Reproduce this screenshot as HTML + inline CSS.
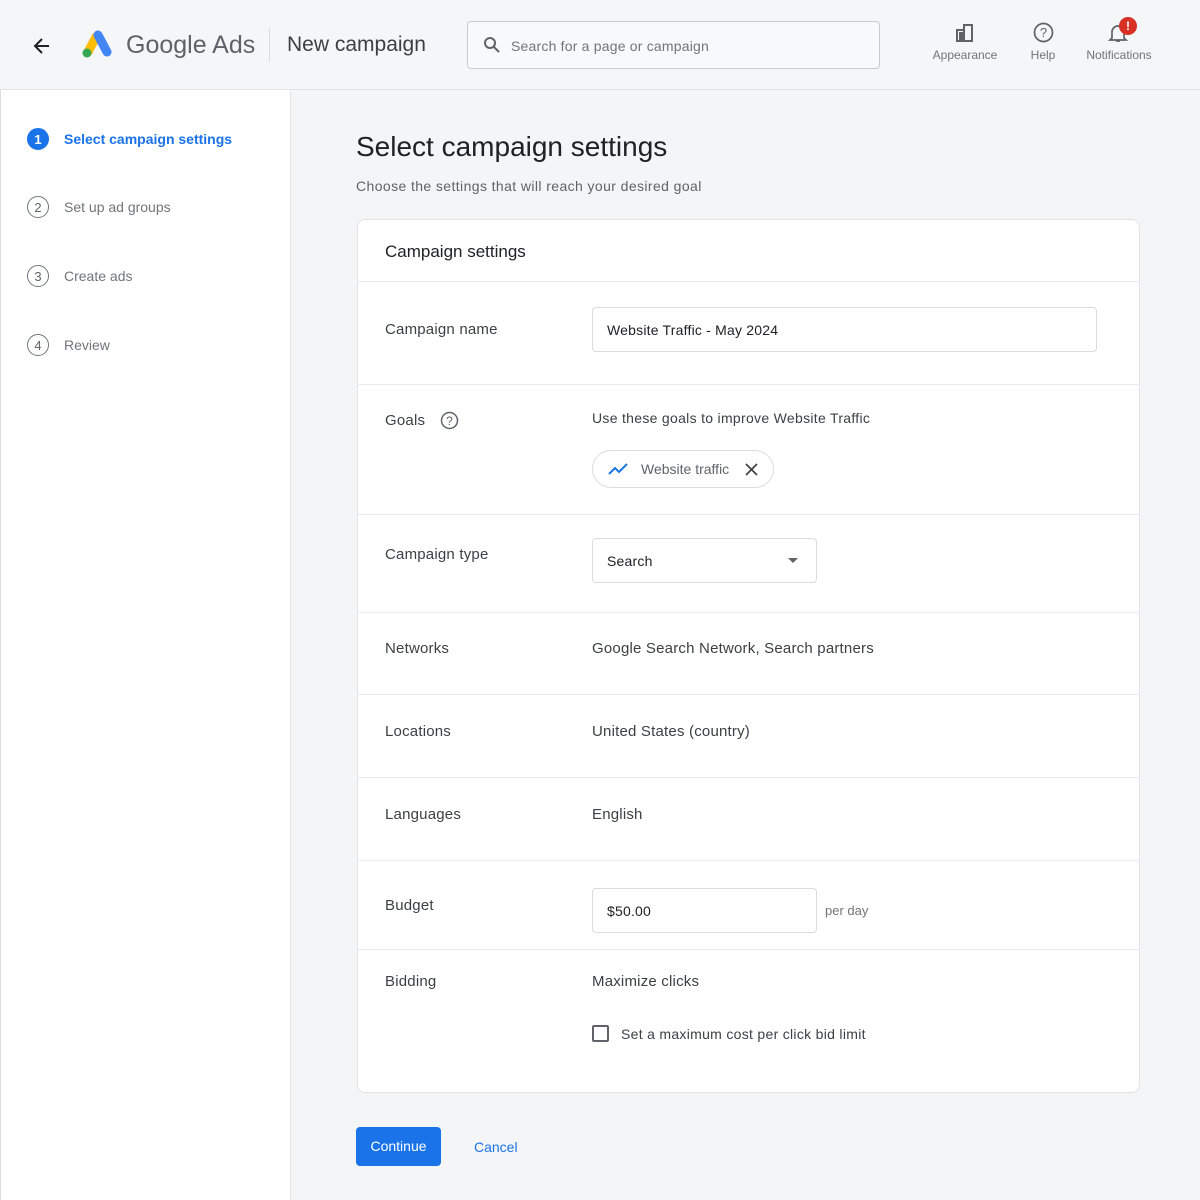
<!DOCTYPE html>
<html><head><style>
*{box-sizing:border-box;margin:0;padding:0}
body{width:1200px;height:1200px;overflow:hidden;font-family:"Liberation Sans",Arial,sans-serif;background:#f4f5f6;position:relative;color:#3c4043}
.abs{position:absolute}
.hdr{left:0;top:0;width:1200px;height:90px;background:#f5f6f7;border-bottom:1px solid #e3e4e6}
.side{left:0;top:90px;width:291px;height:1110px;background:#fff;border-right:1px solid #e3e4e6;border-left:1px solid #ddd}
.main{left:292px;top:90px;width:908px;height:1110px;background:#f4f5f6}
.step{left:27px;font-size:14px;color:#70757a;display:flex;align-items:center}
.circ{width:22px;height:22px;border-radius:50%;border:1.5px solid #70757a;font-size:13px;display:flex;align-items:center;justify-content:center;margin-right:15px;color:#5f6368}
.card{left:357px;top:219px;width:783px;height:874px;background:#fff;border:1px solid #e3e4e6;border-radius:8px}
.line{left:357px;width:783px;height:1px;background:#e8eaed}
.lbl{left:385px;font-size:15px;color:#3c4043;letter-spacing:0.2px}
.val{left:592px;font-size:15px;color:#3c4043;letter-spacing:0.2px}
.inp{border:1px solid #dadce0;border-radius:4px;background:#fff;font-size:14px;color:#202124;padding-left:14px;display:flex;align-items:center;letter-spacing:0.2px}
.ico{text-align:center;font-size:12px;color:#70757a}
</style></head><body>
<div class="abs hdr"></div>
<svg class="abs" style="left:33px;top:37px" width="18" height="18" viewBox="0 0 18 18"><path d="M16 9H3M9 2L2 9l7 7" stroke="#202124" stroke-width="2" fill="none"/></svg>
<svg class="abs" style="left:80px;top:29px" width="34" height="30" viewBox="0 0 34 30"><path d="M8 23L16 8" stroke="#fbbc04" stroke-width="9" stroke-linecap="round"/><path d="M18 6L27 23" stroke="#4285f4" stroke-width="9" stroke-linecap="round"/><circle cx="7" cy="24" r="4.5" fill="#34a853"/></svg>
<div class="abs" style="left:126px;top:31px;font-size:25px;color:#5f6368">Google Ads</div>
<div class="abs" style="left:269px;top:28px;width:1px;height:34px;background:#dadce0"></div>
<div class="abs" style="left:287px;top:33px;font-size:21px;color:#3c4043">New campaign</div>
<div class="abs" style="left:467px;top:21px;width:413px;height:48px;border:1px solid #c9cbce;border-radius:4px;background:#f8f9fa"></div>
<svg class="abs" style="left:483px;top:36px" width="18" height="18" viewBox="0 0 18 18"><circle cx="7" cy="7" r="5" stroke="#5f6368" stroke-width="2" fill="none"/><path d="M11 11l5 5" stroke="#5f6368" stroke-width="2"/></svg>
<div class="abs" style="left:511px;top:38px;font-size:14px;color:#70757a;letter-spacing:0.2px">Search for a page or campaign</div>
<svg class="abs" style="left:955px;top:23px" width="20" height="19" viewBox="0 0 20 19"><path d="M2 7h7v11H2zM9 2h8v16H9z" stroke="#5f6368" stroke-width="2" fill="none"/><rect x="4" y="9" width="4" height="8" fill="#5f6368"/></svg>
<div class="abs ico" style="left:925px;top:48px;width:80px">Appearance</div>
<svg class="abs" style="left:1033px;top:22px" width="21" height="21" viewBox="0 0 21 21"><circle cx="10.5" cy="10.5" r="9" stroke="#5f6368" stroke-width="1.7" fill="none"/><text x="10.5" y="15" text-anchor="middle" font-size="13" font-family="Liberation Sans" fill="#5f6368">?</text></svg>
<div class="abs ico" style="left:1023px;top:48px;width:40px">Help</div>
<svg class="abs" style="left:1108px;top:22px" width="20" height="22" viewBox="0 0 20 22"><path d="M4 16V10a6 6 0 0112 0v6l2 2H2z M8 19h4" stroke="#5f6368" stroke-width="1.7" fill="none"/></svg>
<div class="abs" style="left:1119px;top:17px;width:18px;height:18px;border-radius:50%;background:#d93025;color:#fff;font-size:12px;font-weight:bold;text-align:center;line-height:18px">!</div>
<div class="abs ico" style="left:1078px;top:48px;width:82px">Notifications</div>

<div class="abs side"></div>
<div class="abs step" style="top:128px"><div class="circ" style="background:#1a73e8;border-color:#1a73e8;color:#fff;font-weight:bold">1</div><span style="color:#1a73e8;font-weight:bold">Select campaign settings</span></div>
<div class="abs step" style="top:196px"><div class="circ">2</div>Set up ad groups</div>
<div class="abs step" style="top:265px"><div class="circ">3</div>Create ads</div>
<div class="abs step" style="top:334px"><div class="circ">4</div>Review</div>

<div class="abs main"></div>
<div class="abs" style="left:356px;top:131px;font-size:28px;color:#202124">Select campaign settings</div>
<div class="abs" style="left:356px;top:178px;font-size:14px;color:#5f6368;letter-spacing:0.4px">Choose the settings that will reach your desired goal</div>
<div class="abs card"></div>
<div class="abs" style="left:385px;top:242px;font-size:17px;color:#202124">Campaign settings</div>
<div class="abs line" style="top:281px"></div>
<div class="abs line" style="top:384px"></div>
<div class="abs line" style="top:514px"></div>
<div class="abs line" style="top:612px"></div>
<div class="abs line" style="top:694px"></div>
<div class="abs line" style="top:777px"></div>
<div class="abs line" style="top:860px"></div>
<div class="abs line" style="top:949px"></div>

<div class="abs lbl" style="top:321px">Campaign name</div>
<div class="abs inp" style="left:592px;top:307px;width:505px;height:45px">Website Traffic - May 2024</div>

<div class="abs lbl" style="top:412px">Goals</div>
<svg class="abs" style="left:440px;top:411px" width="19" height="19" viewBox="0 0 19 19"><circle cx="9.5" cy="9.5" r="8" stroke="#5f6368" stroke-width="1.5" fill="none"/><text x="9.5" y="14" text-anchor="middle" font-size="12" font-family="Liberation Sans" fill="#5f6368">?</text></svg>
<div class="abs val" style="top:410px;font-size:14px;letter-spacing:0.3px">Use these goals to improve Website Traffic</div>
<div class="abs" style="left:592px;top:450px;width:182px;height:38px;border:1px solid #dadce0;border-radius:19px;background:#fff"></div>
<svg class="abs" style="left:607px;top:461px" width="22" height="16" viewBox="0 0 22 16"><path d="M2 13l6-6 4 4 8-8" stroke="#1a73e8" stroke-width="2" fill="none"/></svg>
<div class="abs" style="left:641px;top:461px;font-size:14px;color:#5f6368">Website traffic</div>
<svg class="abs" style="left:745px;top:463px" width="13" height="13" viewBox="0 0 13 13"><path d="M1 1l11 11M12 1L1 12" stroke="#3c4043" stroke-width="1.7"/></svg>

<div class="abs lbl" style="top:546px">Campaign type</div>
<div class="abs inp" style="left:592px;top:538px;width:225px;height:45px">Search</div>
<div class="abs" style="left:788px;top:558px;border-left:5px solid transparent;border-right:5px solid transparent;border-top:5px solid #5f6368"></div>

<div class="abs lbl" style="top:640px">Networks</div>
<div class="abs val" style="top:640px">Google Search Network, Search partners</div>
<div class="abs lbl" style="top:723px">Locations</div>
<div class="abs val" style="top:723px">United States (country)</div>
<div class="abs lbl" style="top:806px">Languages</div>
<div class="abs val" style="top:806px">English</div>

<div class="abs lbl" style="top:897px">Budget</div>
<div class="abs inp" style="left:592px;top:888px;width:225px;height:45px">$50.00</div>
<div class="abs" style="left:825px;top:903px;font-size:13px;color:#70757a">per day</div>

<div class="abs lbl" style="top:973px">Bidding</div>
<div class="abs val" style="top:973px">Maximize clicks</div>
<div class="abs" style="left:592px;top:1025px;width:17px;height:17px;border:2px solid #5f6368;border-radius:2px"></div>
<div class="abs val" style="left:621px;top:1026px;font-size:14px;letter-spacing:0.3px">Set a maximum cost per click bid limit</div>

<div class="abs" style="left:356px;top:1127px;width:85px;height:39px;background:#1a73e8;border-radius:4px;color:#fff;font-size:14px;text-align:center;line-height:39px">Continue</div>
<div class="abs" style="left:474px;top:1139px;font-size:14px;color:#1a73e8">Cancel</div>
</body></html>
